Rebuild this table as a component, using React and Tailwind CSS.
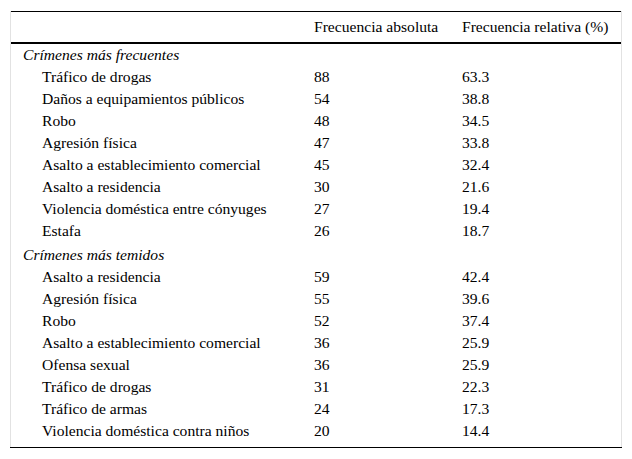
import React from 'react';

const frecuentes = [
    ['Tráfico de drogas', '88', '63.3'],
    ['Daños a equipamientos públicos', '54', '38.8'],
    ['Robo', '48', '34.5'],
    ['Agresión física', '47', '33.8'],
    ['Asalto a establecimiento comercial', '45', '32.4'],
    ['Asalto a residencia', '30', '21.6'],
    ['Violencia doméstica entre cónyuges', '27', '19.4'],
    ['Estafa', '26', '18.7'],
];

const temidos = [
    ['Asalto a residencia', '59', '42.4'],
    ['Agresión física', '55', '39.6'],
    ['Robo', '52', '37.4'],
    ['Asalto a establecimiento comercial', '36', '25.9'],
    ['Ofensa sexual', '36', '25.9'],
    ['Tráfico de drogas', '31', '22.3'],
    ['Tráfico de armas', '24', '17.3'],
    ['Violencia doméstica contra niños', '20', '14.4'],
];

const Row = ({ row }) => (
    <div className="flex h-[22px] items-center">
        <div className="w-[291px] pl-[31px]">{row[0]}</div>
        <div className="w-[148px] pl-[12px]">{row[1]}</div>
        <div className="pl-[12px]">{row[2]}</div>
    </div>
);

export default function App() {
    return (
        <div className="min-h-[459px] bg-white pt-[11px] pl-[10px] font-['Liberation_Serif','Times_New_Roman',serif] text-[15.6px] leading-[22px] text-black">
            <div className="w-[612px]">
                <div className="border-x border-[#e2e2e2]">
                    {/* Cabecera */}
                    <div className="flex h-[33px] items-center border-t border-b-2 border-black pb-[1px]">
                        <div className="w-[291px]"></div>
                        <div className="w-[148px] pl-[12px]">Frecuencia absoluta</div>
                        <div className="pl-[12px]">Frecuencia relativa (%)</div>
                    </div>

                    {/* Crímenes más frecuentes */}
                    <div className="flex h-[22px] items-center pl-[12px] italic">Crímenes más frecuentes</div>
                    {frecuentes.map((row, i) => (
                        <Row key={i} row={row} />
                    ))}

                    {/* Crímenes más temidos */}
                    <div className="flex h-[24px] items-end pl-[12px] italic">
                        <span className="leading-[22px]">Crímenes más temidos</span>
                    </div>
                    {temidos.map((row, i) => (
                        <Row key={i} row={row} />
                    ))}
                    <div className="h-[5px]"></div>
                </div>
                <div className="border-t border-black"></div>
            </div>
        </div>
    );
}
